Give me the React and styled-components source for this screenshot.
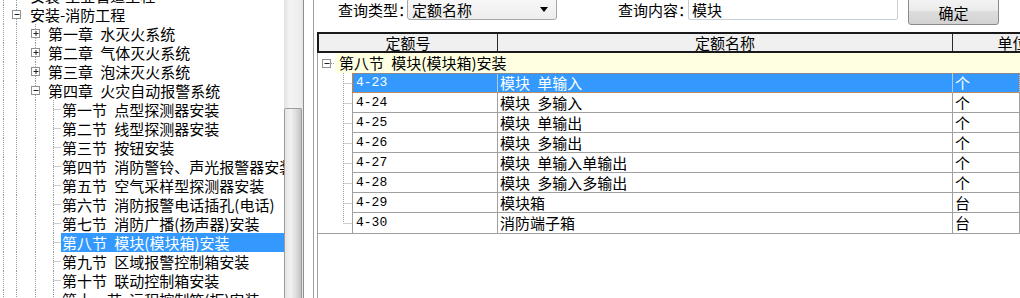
import React from 'react';
import styled, { createGlobalStyle } from 'styled-components';

const GlobalStyle = createGlobalStyle`
  html, body {
    margin: 0;
    padding: 0;
    background: #fff;
    overflow: hidden;
  }
  body {
    font-family: "Noto Sans CJK SC", "Noto Sans", sans-serif;
    font-size: 15px;
    color: #000;
  }
`;

const Window = styled.div`
  display: flex;
  width: 1020px;
  height: 298px;
  overflow: hidden;
  background: #fff;
`;

// left tree
const TreePanel = styled.div`
  width: 284px;
  flex: none;
  overflow: hidden;
`;

const TreeList = styled.div`
  margin-top: -14px;
`;

const TreeRow = styled.div`
  display: flex;
  height: 19px;
`;

const TreeLabel = styled.div`
  flex: 1;
  padding-left: 1px;
  line-height: 19px;
  white-space: pre;
  word-spacing: 4px;
  overflow: hidden;
  background: ${p => (p.$selected ? '#3399ff' : 'transparent')};
  color: ${p => (p.$selected ? '#fff' : '#000')};
`;

const Scrollbar = styled.div`
  width: 19px;
  flex: none;
  border-right: 1px solid #8e8e8e;
  display: flex;
  flex-direction: column;
  background: linear-gradient(to right, #e2e2e2, #f3f3f3 30%, #eeeeee 80%, #e6e6e6);
`;

const Thumb = styled.div`
  margin-top: 108px;
  flex: 1;
  width: 18px;
  border: 1px solid #9c9c9c;
  border-bottom: none;
  border-radius: 2px 2px 0 0;
  box-sizing: border-box;
  background: linear-gradient(to right, #e4e4e4, #f2f2f2 35%, #dcdcdc 70%, #c2c2c2);
`;

// right panel
const RightPanel = styled.div`
  flex: 1;
  min-width: 0;
  margin-left: 9px;
  border-left: 1px solid #a0a0a0;
  display: flex;
  flex-direction: column;
`;

const TopBar = styled.div`
  height: 32px;
  flex: none;
  display: flex;
  align-items: flex-start;
  padding-left: 24px;
`;

const FieldLabel = styled.div`
  width: ${p => p.$w}px;
  margin-left: ${p => p.$gap || 0}px;
  flex: none;
  margin-top: 1px;
  line-height: 18px;
  white-space: nowrap;
`;

const Select = styled.div`
  width: 150px;
  height: 22px;
  margin-top: -2px;
  flex: none;
  box-sizing: border-box;
  border: 1px solid #a3a7ad;
  border-radius: 3px;
  background: linear-gradient(#f7f7f7, #ededed);
  display: flex;
  align-items: center;
  padding: 1px 8px 0 4px;
  justify-content: space-between;
`;

const Arrow = styled.span`
  width: 0;
  height: 0;
  border-left: 4px solid transparent;
  border-right: 4px solid transparent;
  border-top: 5px solid #000;
`;

const TextBox = styled.div`
  width: 210px;
  height: 22px;
  margin-top: -2px;
  flex: none;
  box-sizing: border-box;
  border: 1px solid #c6ced8;
  border-radius: 2px;
  background: #fff;
  padding: 1px 0 0 3px;
  line-height: 19px;
`;

const Button = styled.div`
  width: 91px;
  height: 28px;
  margin-top: -3px;
  margin-left: 10px;
  flex: none;
  box-sizing: border-box;
  border: 1px solid #8b8b8b;
  border-radius: 3px;
  background: linear-gradient(#f4f4f4 0%, #ebebeb 48%, #dddddd 52%, #d2d2d2 100%);
  display: flex;
  align-items: center;
  justify-content: center;
  padding-top: 3px;
`;

const Grid = styled.div`
  flex: 1;
  margin-left: 3px;
  border-left: 1px solid #a0a0a0;
  display: flex;
  flex-direction: column;
`;

const Header = styled.div`
  display: grid;
  grid-template-columns: 179px 455px 120px;
  height: 21px;
  margin-left: -1px;
  box-sizing: border-box;
  border-top: 2px solid #1a1a1a;
  border-bottom: 2px solid #1a1a1a;
  border-left: 2px solid #1a1a1a;
  background: #f0f0f0;
`;

const HeaderCell = styled.div`
  border-right: 1px solid #2a2a2a;
  text-align: center;
  line-height: 17px;
  white-space: nowrap;
  overflow: hidden;
`;

const GroupRow = styled.div`
  display: flex;
  height: 20px;
`;

const GroupLabel = styled.div`
  flex: 1;
  background: #ffffe1;
  padding-left: 4px;
  line-height: 20px;
  white-space: pre;
  word-spacing: 4px;
`;

const RowList = styled.div`
  border-bottom: 1px solid #a0a0a0;
`;

const DataRow = styled.div`
  display: flex;
  height: 20px;
`;

const Cells = styled.div`
  flex: 1;
  display: grid;
  grid-template-columns: 145px 455px 1fr;
  border-left: 1px solid ${p => (p.$selected ? '#d97b2c' : '#a0a0a0')};
  background: ${p => (p.$selected ? '#3399ff' : '#fff')};
  color: ${p => (p.$selected ? '#fff' : '#000')};
  outline: ${p => (p.$selected ? '1px dotted #d97b2c' : 'none')};
  outline-offset: -1px;
`;

const Cell = styled.div`
  box-sizing: border-box;
  border-right: 1px solid ${p => (p.$selected ? '#b7c9dd' : '#a0a0a0')};
  border-bottom: ${p => (p.$last ? 'none' : '1px solid #a0a0a0')};
  padding-left: ${p => (p.$mono ? 3 : 2)}px;
  line-height: 19px;
  white-space: pre;
  word-spacing: 4px;
  overflow: hidden;
  font-family: ${p => (p.$mono ? '"Liberation Mono", monospace' : 'inherit')};
  font-size: ${p => (p.$mono ? 13 : 15)}px;
`;

const dots = { stroke: '#9a9a9a', strokeWidth: 1, strokeDasharray: '1 1' };
const levelX = [3.5, 16.5, 35.5, 53.5];
const textX = [29, 47, 61];

const ExpandBox = ({ x, y, open }) => (
  <g>
    <rect x={x} y={y} width="8" height="8" fill="#fff" stroke="#929292" />
    <line x1={x + 2} y1={y + 4} x2={x + 7} y2={y + 4} stroke="#222" />
    {!open && <line x1={x + 4.5} y1={y + 1.5} x2={x + 4.5} y2={y + 6.5} stroke="#222" />}
  </g>
);

const TreeGuides = ({ level, box }) => {
  const w = textX[level];
  const lines = [];
  for (let i = 0; i <= level + 1; i++) {
    lines.push(<line key={i} x1={levelX[i]} y1="0" x2={levelX[i]} y2="19" {...dots} />);
  }
  const own = levelX[level + 1];
  return (
    <svg width={w} height="19" style={{ flex: 'none' }}>
      {lines}
      {box ? (
        <ExpandBox x={own - 4} y={5.5} open={box === '-'} />
      ) : (
        <line x1={own} y1="9.5" x2={w} y2="9.5" {...dots} />
      )}
    </svg>
  );
};

const RowGuide = ({ last }) => (
  <svg width="34" height="20" style={{ flex: 'none' }}>
    <line x1="25.5" y1="0" x2="25.5" y2={last ? 10 : 20} {...dots} />
    <line x1="25.5" y1="10.5" x2="34" y2="10.5" {...dots} />
  </svg>
);

const GroupGuide = () => (
  <svg width="17" height="20" style={{ flex: 'none' }}>
    <ExpandBox x={4.5} y={6.5} open />
    <line x1="13" y1="10.5" x2="17" y2="10.5" {...dots} />
  </svg>
);

const tree = [
  { label: '安装-工业管道工程', level: 0, box: '+' },
  { label: '安装-消防工程', level: 0, box: '-' },
  { label: '第一章 水灭火系统', level: 1, box: '+' },
  { label: '第二章 气体灭火系统', level: 1, box: '+' },
  { label: '第三章 泡沫灭火系统', level: 1, box: '+' },
  { label: '第四章 火灾自动报警系统', level: 1, box: '-' },
  { label: '第一节 点型探测器安装', level: 2 },
  { label: '第二节 线型探测器安装', level: 2 },
  { label: '第三节 按钮安装', level: 2 },
  { label: '第四节 消防警铃、声光报警器安装', level: 2 },
  { label: '第五节 空气采样型探测器安装', level: 2 },
  { label: '第六节 消防报警电话插孔(电话)', level: 2 },
  { label: '第七节 消防广播(扬声器)安装', level: 2 },
  { label: '第八节 模块(模块箱)安装', level: 2, selected: true },
  { label: '第九节 区域报警控制箱安装', level: 2 },
  { label: '第十节 联动控制箱安装', level: 2 },
  { label: '第十一节 远程控制箱(柜)安装', level: 2 },
];

const rows = [
  { code: '4-23', name: '模块 单输入', unit: '个' },
  { code: '4-24', name: '模块 多输入', unit: '个' },
  { code: '4-25', name: '模块 单输出', unit: '个' },
  { code: '4-26', name: '模块 多输出', unit: '个' },
  { code: '4-27', name: '模块 单输入单输出', unit: '个' },
  { code: '4-28', name: '模块 多输入多输出', unit: '个' },
  { code: '4-29', name: '模块箱', unit: '台' },
  { code: '4-30', name: '消防端子箱', unit: '台' },
];

const App = () => {
  const selected = 0;
  return (
    <Window>
      <GlobalStyle />
      <TreePanel>
        <TreeList>
          {tree.map(node => (
            <TreeRow key={node.label}>
              <TreeGuides level={node.level} box={node.box} />
              <TreeLabel $selected={node.selected}>{node.label}</TreeLabel>
            </TreeRow>
          ))}
        </TreeList>
      </TreePanel>
      <Scrollbar>
        <Thumb />
      </Scrollbar>
      <RightPanel>
        <TopBar>
          <FieldLabel $w={69}>查询类型：</FieldLabel>
          <Select>
            <span>定额名称</span>
            <Arrow />
          </Select>
          <FieldLabel $w={70} $gap={61}>查询内容：</FieldLabel>
          <TextBox>模块</TextBox>
          <Button>确定</Button>
        </TopBar>
        <Grid>
          <Header>
            <HeaderCell>定额号</HeaderCell>
            <HeaderCell>定额名称</HeaderCell>
            <HeaderCell>单位</HeaderCell>
          </Header>
          <GroupRow>
            <GroupGuide />
            <GroupLabel>第八节 模块(模块箱)安装</GroupLabel>
          </GroupRow>
          <RowList>
            {rows.map((r, i) => {
              const last = i === rows.length - 1;
              const sel = i === selected;
              return (
                <DataRow key={r.code}>
                  <RowGuide last={last} />
                  <Cells $selected={sel}>
                    <Cell $mono $last={last} $selected={sel}>{r.code}</Cell>
                    <Cell $last={last} $selected={sel}>{r.name}</Cell>
                    <Cell $last={last} $selected={sel}>{r.unit}</Cell>
                  </Cells>
                </DataRow>
              );
            })}
          </RowList>
        </Grid>
      </RightPanel>
    </Window>
  );
};

export default App;
